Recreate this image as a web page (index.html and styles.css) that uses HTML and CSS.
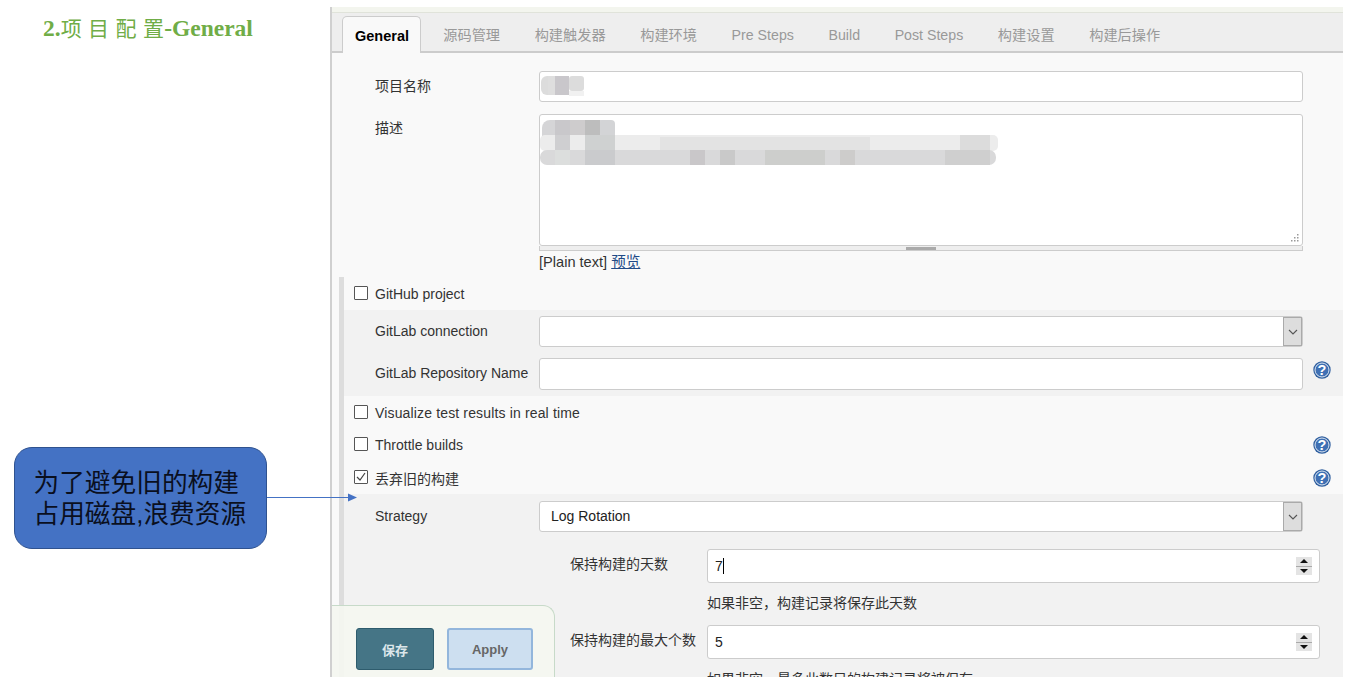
FILE: index.html
```html
<!DOCTYPE html>
<html lang="zh-CN">
<head>
<meta charset="utf-8">
<title>项目配置 General</title>
<link rel="stylesheet" href="styles.css">
</head>
<body>
<div class="slide">
  <aside class="notes">
    <h1 class="title">2.<span class="title-cjk">项目配置</span>-General</h1>
    <div class="callout">为了避免旧的构建<br>占用磁盘,浪费资源</div>
  </aside>

  <main class="panel">
    <nav class="tabs">
      <a class="tab active">General</a>
      <a class="tab">源码管理</a>
      <a class="tab">构建触发器</a>
      <a class="tab">构建环境</a>
      <a class="tab">Pre Steps</a>
      <a class="tab">Build</a>
      <a class="tab">Post Steps</a>
      <a class="tab">构建设置</a>
      <a class="tab">构建后操作</a>
    </nav>

    <div class="form">
      <div class="row row-name">
        <label class="label">项目名称</label>
        <div class="input field">
          <svg class="smear" width="50" height="24" viewBox="0 0 50 24">
            <rect x="1" y="2" width="13" height="19" rx="6" fill="#dcdcdc"/>
            <rect x="8" y="2" width="14" height="19" fill="#dedede"/>
            <rect x="15" y="2" width="14" height="19" fill="#c9c7cb"/>
            <rect x="29" y="2" width="15" height="15" rx="3" fill="#dcdcdc"/>
            <rect x="29" y="17" width="15" height="5" fill="#f1f1f1"/>
          </svg>
        </div>
      </div>

      <div class="row row-desc">
        <label class="label">描述</label>
        <div class="field">
          <div class="input textarea">
            <svg class="smear" width="470" height="60" viewBox="0 0 470 60">
              <rect x="2" y="5" width="73" height="30" rx="8" fill="#d5d5d7"/>
              <rect x="15" y="5" width="15" height="15" fill="#c9c8cb"/>
              <rect x="30" y="5" width="15" height="15" fill="#cecccd"/>
              <rect x="45" y="5" width="15" height="15" fill="#bdbdbd"/>
              <rect x="60" y="5" width="15" height="15" rx="4" fill="#d3d4d6"/>
              <rect x="0" y="20" width="458" height="16" rx="5" fill="#ececec"/>
              <rect x="15" y="20" width="15" height="15" fill="#cfcfd1"/>
              <rect x="45" y="20" width="30" height="15" fill="#cfd1d1"/>
              <rect x="120" y="22" width="210" height="13" fill="#e3e3e3"/>
              <rect x="0" y="35" width="456" height="15" rx="7" fill="#d9d9da"/>
              <rect x="15" y="35" width="15" height="15" fill="#dcdedd"/>
              <rect x="45" y="35" width="30" height="15" fill="#cacbcd"/>
              <rect x="150" y="35" width="15" height="15" fill="#c9c7c9"/>
              <rect x="180" y="35" width="15" height="15" fill="#c9c9c9"/>
              <rect x="225" y="35" width="60" height="15" fill="#cdcecc"/>
              <rect x="300" y="35" width="15" height="15" fill="#cdcccb"/>
              <rect x="405" y="35" width="45" height="15" fill="#cfcfcf"/>
              <rect x="420" y="20" width="30" height="15" fill="#dcdcdc"/>
            </svg>
            <svg class="grip" width="10" height="10" viewBox="0 0 10 10">
              <path d="M8 1h1.500v1.500H8zM5 4h1.500v1.500H5zM8 4h1.500v1.500H8zM2 7h1.500v1.500H2zM5 7h1.500v1.500H5zM8 7h1.500v1.500H8z" fill="#9a9a9a"/>
            </svg>
          </div>
          <div class="resize-bar"><span class="resize-handle"></span></div>
          <div class="format">[Plain text] <a class="link">预览</a></div>
        </div>
      </div>

      <section class="options">
        <div class="check-row check-github">
          <span class="checkbox"></span><span>GitHub project</span>
        </div>

        <div class="sub sub-gitlab">
          <div class="row">
            <label class="label label-sub">GitLab connection</label>
            <div class="input select field"><span class="select-btn"><svg width="10" height="6" viewBox="0 0 10 6"><path d="M1 1l4 4 4-4" fill="none" stroke="#555" stroke-width="1.100"/></svg></span></div>
          </div>
          <div class="row row-gap">
            <label class="label label-sub">GitLab Repository Name</label>
            <div class="input field field-tall"></div>
            <svg class="help help-raised" width="18" height="18" viewBox="0 0 18 18"><circle cx="9" cy="9" r="8.700" fill="#2f5f9f"/><circle cx="9" cy="9" r="7" fill="#3f70b4" stroke="#dfe8f3" stroke-width="1"/><text x="9" y="14" class="help-mark">?</text></svg>
          </div>
        </div>

        <div class="check-row check-vis">
          <span class="checkbox"></span><span class="vis-text">Visualize test results in real time</span>
        </div>
        <div class="check-row check-throttle">
          <span class="checkbox"></span><span>Throttle builds</span>
          <svg class="help help-end" width="18" height="18" viewBox="0 0 18 18"><circle cx="9" cy="9" r="8.700" fill="#2f5f9f"/><circle cx="9" cy="9" r="7" fill="#3f70b4" stroke="#dfe8f3" stroke-width="1"/><text x="9" y="14" class="help-mark">?</text></svg>
        </div>
        <div class="check-row check-discard">
          <span class="checkbox"><svg width="12" height="12" viewBox="0 0 12 12"><path d="M2 6l3 3 5-7" fill="none" stroke="#444" stroke-width="1.200"/></svg></span><span>丢弃旧的构建</span>
          <svg class="help help-end" width="18" height="18" viewBox="0 0 18 18"><circle cx="9" cy="9" r="8.700" fill="#2f5f9f"/><circle cx="9" cy="9" r="7" fill="#3f70b4" stroke="#dfe8f3" stroke-width="1"/><text x="9" y="14" class="help-mark">?</text></svg>
        </div>

        <div class="sub sub-strategy">
          <div class="row">
            <label class="label label-sub">Strategy</label>
            <div class="input select field select-text">Log Rotation<span class="select-btn"><svg width="10" height="6" viewBox="0 0 10 6"><path d="M1 1l4 4 4-4" fill="none" stroke="#555" stroke-width="1.100"/></svg></span></div>
          </div>

          <div class="num-row num-first">
            <label class="num-label">保持构建的天数</label>
            <div class="input num">7<span class="caret"></span>
              <span class="spin"><span class="spin-up"></span><span class="spin-down"></span></span>
            </div>
          </div>
          <div class="hint">如果非空，构建记录将保存此天数</div>

          <div class="num-row">
            <label class="num-label">保持构建的最大个数</label>
            <div class="input num">5
              <span class="spin"><span class="spin-up"></span><span class="spin-down"></span></span>
            </div>
          </div>
          <div class="hint">如果非空，最多此数目的构建记录将被保存</div>
        </div>
      </section>
    </div>

    <div class="savebar">
      <button class="btn btn-save">保存</button>
      <button class="btn btn-apply">Apply</button>
    </div>
  </main>

  <svg class="arrow" width="92" height="10" viewBox="0 0 92 10">
    <path d="M0 5.500H82" stroke="#4472c4" stroke-width="1"/>
    <path d="M81 1.500l9 4-9 4z" fill="#4472c4"/>
  </svg>
</div>
</body>
</html>
```

FILE: styles.css
```css
* { box-sizing: border-box; }

html, body {
  margin: 0;
  height: 100%;
  overflow: hidden;
  background: #fff;
}

body {
  font-family: "Liberation Sans", "Noto Sans CJK SC", sans-serif;
  font-size: 14px;
  color: #333;
}

.slide {
  position: relative;
  display: grid;
  grid-template-columns: 330px 1013px;
  height: 677px;
  overflow: hidden;
}

/* Left notes */
.notes {
  padding: 12px 0 0 14px;
}

.title {
  margin: 0 0 0 29px;
  height: 32px;
  font-family: "Liberation Serif", "Noto Sans CJK SC", serif;
  font-size: 23.500px;
  line-height: 33px;
  font-weight: 700;
  color: #70ad47;
  white-space: nowrap;
}

.title-cjk {
  margin-right: -6.500px;
  font-size: 21px;
  font-weight: 400;
  letter-spacing: 6.500px;
}

.callout {
  margin-top: 403px;
  width: 253px;
  height: 102px;
  padding: 20px 0 0 18.500px;
  background: #4472c4;
  border: 1px solid #2f528f;
  border-radius: 18px;
  color: #0a0f1e;
  font-size: 25.700px;
  line-height: 31px;
  white-space: nowrap;
}

.arrow {
  position: absolute;
  left: 267px;
  top: 492px;
}

/* Jenkins panel */
.panel {
  position: relative;
  margin-top: 7px;
  height: 670px;
  overflow: hidden;
  background: #f9f9f9;
  border-left: 2px solid #d0d0d0;
}

.tabs {
  display: flex;
  align-items: flex-end;
  height: 46px;
  padding-left: 10px;
  background: #eee;
  border-top: 5px solid #f3f5ee;
  border-bottom: 2px solid #ccc;
  box-shadow: inset 0 1px 0 #e0e3da;
}

.tab {
  height: 36px;
  padding: 0 17.300px;
  font-size: 14.200px;
  line-height: 41px;
  color: #999;
  white-space: nowrap;
}

.tab.active {
  height: 37px;
  margin-right: 5px;
  margin-bottom: -2px;
  padding: 0 11px 0 12px;
  background: #f9f9f9;
  border: 1px solid #ccc;
  border-bottom: 0;
  border-radius: 5px 5px 0 0;
  color: #000;
  font-size: 14.500px;
  line-height: 39px;
  font-weight: 700;
}

.form {
  padding-top: 18px;
}

.row {
  display: flex;
  align-items: center;
  padding-left: 43px;
}

.row-desc {
  align-items: flex-start;
  margin-top: 12px;
}

.row-desc .label {
  margin-top: 4px;
}

.label {
  flex: 0 0 164px;
  margin-top: -2px;
  line-height: 20px;
  white-space: nowrap;
}

.input {
  position: relative;
  background: #fff;
  border: 1px solid #ccc;
  border-radius: 3px;
}

.field {
  flex: 0 0 764px;
  width: 764px;
  height: 31px;
}

.row-desc .field {
  height: auto;
}

.field-tall {
  height: 32px;
}

.smear {
  position: absolute;
  left: 0;
  top: 2px;
}

.textarea {
  height: 132px;
}

.textarea .smear {
  top: 0;
}

.grip {
  position: absolute;
  right: 3px;
  bottom: 2px;
}

.resize-bar {
  position: relative;
  height: 5px;
  background: #eee;
  border: 1px solid #ccc;
  border-top: 0;
}

.resize-handle {
  position: absolute;
  left: 366px;
  top: 1px;
  width: 30px;
  height: 3px;
  background: #aaa;
}

.format {
  margin-top: 1px;
  font-size: 14.600px;
  line-height: 20px;
}

.link {
  color: #204a87;
  text-decoration: underline;
}

.options {
  margin: 5px 0 0 7px;
  border-left: 5px solid #ddd;
}

.check-row {
  display: flex;
  align-items: center;
  padding-left: 10px;
}

.checkbox {
  display: flex;
  align-items: center;
  justify-content: center;
  flex: 0 0 14px;
  width: 14px;
  height: 14px;
  margin-right: 7px;
  margin-top: -2px;
  background: #fff;
  border: 1px solid #555;
  border-radius: 1px;
}

.vis-text {
  letter-spacing: 0.150px;
}

.check-github { height: 33px; }
.check-vis { height: 34px; }
.check-throttle { height: 29px; }
.check-discard { height: 35px; padding-top: 2px; }

.sub {
  background: #f2f2f2;
}

.sub .row {
  padding-left: 31px;
}

.sub-gitlab {
  height: 86px;
  padding-top: 6px;
}

.row-gap {
  margin-top: 11px;
}

.sub-strategy {
  padding-top: 7px;
  height: 200px;
}

.select {
  background: #fff;
}

.select-text {
  padding-left: 11px;
  line-height: 29px;
  color: #222;
}

.select-btn {
  position: absolute;
  top: 0;
  right: 0;
  display: flex;
  align-items: center;
  justify-content: center;
  width: 19px;
  height: 29px;
  background: #ddd;
  border: 1px solid #aaa;
}

.help {
  flex: 0 0 18px;
  margin-left: 10px;
}

.help-raised {
  margin-bottom: 8px;
}

.help-end {
  position: absolute;
  right: 12px;
}

.help-mark {
  font-family: "Liberation Sans", sans-serif;
  font-size: 14.500px;
  font-weight: 700;
  fill: #fff;
  text-anchor: middle;
}

.num-row {
  display: flex;
  align-items: center;
  padding-left: 226px;
  margin-top: 12px;
}

.num-first {
  margin-top: 17px;
}

.num-label {
  flex: 0 0 137px;
  white-space: nowrap;
  margin-top: -7px;
}

.num {
  display: flex;
  align-items: center;
  flex: 0 0 613px;
  height: 34px;
  padding-left: 7px;
  color: #222;
}

.caret {
  width: 1px;
  height: 16px;
  background: #000;
}

.spin {
  position: absolute;
  right: 7px;
  top: 7px;
  display: flex;
  flex-direction: column;
  gap: 1px;
  width: 16px;
  height: 18px;
  background: #aaa;
}

.spin-up,
.spin-down {
  position: relative;
  flex: 1;
  background: #e4e4e4;
}

.spin-up::after,
.spin-down::after {
  content: "";
  position: absolute;
  left: 4px;
  border-left: 4px solid transparent;
  border-right: 4px solid transparent;
}

.spin-up::after {
  top: 2px;
  border-bottom: 4px solid #111;
}

.spin-down::after {
  top: 2px;
  border-top: 4px solid #111;
}

.hint {
  height: 20px;
  margin-top: 10px;
  padding-left: 363px;
  line-height: 20px;
  white-space: nowrap;
}

/* Floating save bar */
.savebar {
  position: absolute;
  left: -1px;
  bottom: 0;
  display: flex;
  gap: 13px;
  width: 224px;
  height: 72px;
  padding: 22px 0 0 25px;
  background: rgba(244, 247, 240, 0.94);
  border: 1px solid #c7dac9;
  border-bottom: 0;
  border-left: 0;
  border-radius: 0 12px 0 0;
}

.btn {
  height: 42px;
  padding: 0;
  border-radius: 3px;
  font-family: "Liberation Sans", "Noto Sans CJK SC", sans-serif;
  font-size: 13px;
  font-weight: 700;
}

.btn-save {
  width: 78px;
  background: #457586;
  border: 1px solid #2e5c6d;
  color: #dbe6ea;
}

.btn-apply {
  width: 86px;
  background: #cddff0;
  border: 2px solid #93b6dc;
  color: #666;
}
```
